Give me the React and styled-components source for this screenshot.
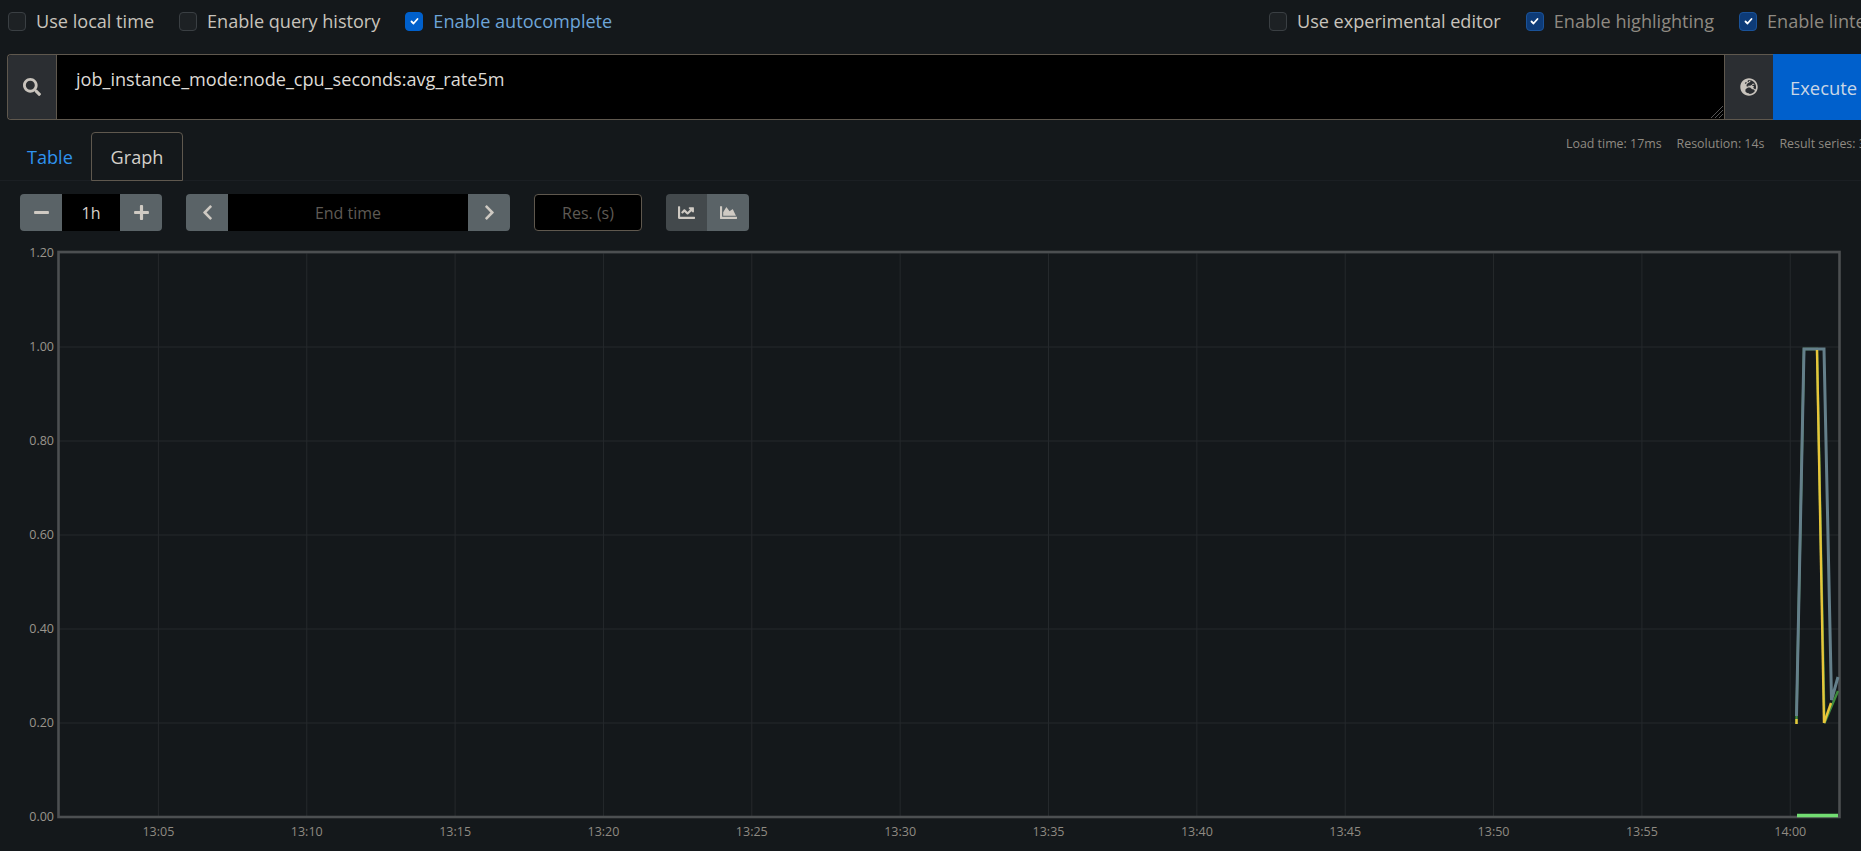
import React from 'react';
import styled, { createGlobalStyle } from 'styled-components';
import { FaSearch, FaGlobeEurope, FaMinus, FaPlus, FaChevronLeft, FaChevronRight, FaChartLine, FaChartArea } from 'react-icons/fa';

const Global = createGlobalStyle`
  html, body { margin: 0; padding: 0; background: #14181b; overflow: hidden; height: 100%; }
  body { font-family: "Open Sans", "Noto Sans", sans-serif; color: #c8c3bc; }
`;
const Page = styled.div`width: 1861px; height: 851px; overflow: hidden; background: #14181b;`;
const Options = styled.div`display: flex; justify-content: space-between; width: 1881px; height: 54px; padding: 0 8px; box-sizing: border-box;`;
const OptionGroup = styled.div`display: flex; align-items: center; gap: 25px;`;
const Option = styled.label`display: flex; align-items: center; gap: 10px; font-size: 18.1px; white-space: nowrap; padding-bottom: 12px; color: ${p => p.$tone || '#c8c3bc'};`;
const Box = styled.span`
  width: 18px; height: 19px; box-sizing: border-box; border-radius: 4px; display: flex; align-items: center; justify-content: center; flex: none;
  border: 1px solid ${p => p.$border || '#3a3f43'}; background: ${p => p.$bg || '#1d2124'};
`;
const QueryBar = styled.div`display: flex; width: 1900px; height: 66px; margin-left: 7px; box-sizing: border-box; border: 1px solid #5f584e; border-right: 0; border-radius: 4px 0 0 4px;`;
const Addon = styled.div`width: 48px; flex: none; background: #2b2e32; display: flex; align-items: center; justify-content: center; color: #c8c3bc; font-size: 18px; border-right: ${p => p.$right ? '1px solid #5f584e' : '0'}; border-left: ${p => p.$left ? '1px solid #5f584e' : '0'}; border-radius: ${p => p.$right ? '4px 0 0 4px' : '0'};`;
const QueryText = styled.div`position: relative; width: 1667px; flex: none; box-sizing: border-box; background: #000; color: #dedbd6; font-size: 18.1px; padding: 12px 19px; line-height: 24px;`;
const Grip = styled.svg`position: absolute; right: 0; bottom: 0;`;
const Execute = styled.div`flex: 1; background: #0060cc; color: #c9d6e6; font-size: 18.4px; margin: -1px 0; display: flex; align-items: center; padding-left: 17px;`;
const TabRow = styled.div`display: flex; align-items: flex-start; margin-top: 12px; height: 49px; padding-left: 7px; width: 1900px; box-sizing: border-box; box-shadow: inset 0 -1px 0 #1b1f23;`;
const TabLink = styled.div`width: 84px; height: 49px; box-sizing: border-box; padding-left: 20px; display: flex; align-items: center; color: #2f93ee; font-size: 18.1px;`;
const TabActive = styled.div`width: 92px; height: 49px; box-sizing: border-box; border: 1px solid #5f584e; border-radius: 4px 4px 0 0; display: flex; align-items: center; justify-content: center; font-size: 18.1px; color: #d4d0ca;`;
const Status = styled.div`display: flex; gap: 15px; margin-left: 1383px; margin-top: 3px; font-size: 12.4px; line-height: 18px; color: #8f8a82; white-space: nowrap;`;
const Controls = styled.div`display: flex; margin: 13px 0 0 20px; height: 37px;`;
const Group = styled.div`display: flex; height: 37px; margin-right: ${p => p.$gap || 0}px; border-radius: 4px; overflow: hidden; flex: none;`;
const Btn = styled.div`width: ${p => p.$w || 42}px; background: ${p => p.$bg || '#5a6367'}; color: #cfcac3; display: flex; align-items: center; justify-content: center; font-size: 17px; flex: none;`;
const Field = styled.div`width: ${p => p.$w}px; background: #000; display: flex; align-items: center; justify-content: center; font-size: 16px; color: ${p => p.$dim ? '#5e5a54' : '#d4d0ca'}; flex: none;`;
const Res = styled(Field)`border: 1px solid #5f584e; border-radius: 4px; height: 37px; box-sizing: border-box; margin-right: 24px;`;
const ChartBox = styled.svg`display: block; margin-top: 10px; width: 1861px; height: 610px;`;

const Check = () => (
  <svg width="11" height="10" viewBox="0 0 20 20"><path d="M4 11l4 4 8-9" fill="none" stroke="#fff" strokeWidth="3.6" strokeLinecap="round" strokeLinejoin="round" /></svg>
);

const OFF = 241;
const xs = ['13:05','13:10','13:15','13:20','13:25','13:30','13:35','13:40','13:45','13:50','13:55','14:00'];
const ys = [['1.20',253],['1.00',347],['0.80',441],['0.60',535],['0.40',629],['0.20',723],['0.00',817]];
const xAt = i => 158.4 + i * 148.35;
const pts = a => a.map(([x, y]) => `${x},${y - OFF}`).join(' ');

const Chart = () => (
  <ChartBox viewBox="0 0 1861 610">
    {xs.map((t, i) => (
      <g key={t}>
        <line x1={xAt(i)} x2={xAt(i)} y1={252 - OFF} y2={816 - OFF} stroke="#25292c" strokeWidth="1" />
        <text x={xAt(i)} y={836 - OFF} textAnchor="middle" fontSize="12.5" fill="#8f8a82" fontFamily="Open Sans, sans-serif">{t}</text>
      </g>
    ))}
    {ys.map(([t, y]) => (
      <g key={t}>
        <line x1="58" x2="1839" y1={y - OFF} y2={y - OFF} stroke="#25292c" strokeWidth="1" />
        <text x="54" y={y - OFF + 4} textAnchor="end" fontSize="12.5" fill="#9a958d" fontFamily="Open Sans, sans-serif">{t}</text>
      </g>
    ))}
    <rect x="58.5" y={252 - OFF} width="1781" height={565} fill="none" stroke="#4c4f51" strokeWidth="2.6" />
    <polyline points={pts([[1796.5,724],[1796.5,718],[1804,349],[1817,349],[1824.5,723],[1838,691]])} fill="none" stroke="#3e8a3e" strokeWidth="2.4" />
    <polyline points={pts([[1796.5,716],[1804,349],[1824,349],[1831.5,700],[1838,677]])} fill="none" stroke="#647f8a" strokeWidth="3" />
    <polyline points={pts([[1824,723],[1831,703]])} fill="none" stroke="#e8c53a" strokeWidth="2.4" />
    <polyline points={pts([[1796.5,724],[1796.5,719]])} fill="none" stroke="#e8c53a" strokeWidth="2.4" />
    <polyline points={pts([[1817,350],[1824,723]])} fill="none" stroke="#e8c53a" strokeWidth="2.4" />
    <line x1="1797" x2="1838" y1={815.5 - OFF} y2={815.5 - OFF} stroke="#72dd72" strokeWidth="3.4" />
  </ChartBox>
);

export default function App() {
  return (
    <Page>
      <Global />
      <Options>
        <OptionGroup>
          <Option><Box />Use local time</Option>
          <Option><Box />Enable query history</Option>
          <Option $tone="#6ea5d8"><Box $bg="#0060cc" $border="#0060cc"><Check /></Box>Enable autocomplete</Option>
        </OptionGroup>
        <OptionGroup>
          <Option><Box />Use experimental editor</Option>
          <Option $tone="#8f8a82"><Box $bg="#0d3b78" $border="#1a5298"><Check /></Box>Enable highlighting</Option>
          <Option $tone="#8f8a82"><Box $bg="#0d3b78" $border="#1a5298"><Check /></Box>Enable linter</Option>
        </OptionGroup>
      </Options>
      <QueryBar>
        <Addon $right><FaSearch /></Addon>
        <QueryText>
          job_instance_mode:node_cpu_seconds:avg_rate5m
          <Grip width="15" height="15" viewBox="0 0 15 15"><path d="M14 2L2 14M14 6L6 14M14 10L10 14" stroke="#555" strokeWidth="1" /></Grip>
        </QueryText>
        <Addon $left><FaGlobeEurope /></Addon>
        <Execute>Execute</Execute>
      </QueryBar>
      <TabRow>
        <TabLink>Table</TabLink>
        <TabActive>Graph</TabActive>
        <Status><span>Load time: 17ms</span><span>Resolution: 14s</span><span>Result series: 3</span></Status>
      </TabRow>
      <Controls>
        <Group $gap={24}>
          <Btn><FaMinus /></Btn><Field $w={58}>1h</Field><Btn><FaPlus /></Btn>
        </Group>
        <Group $gap={24}>
          <Btn><FaChevronLeft /></Btn><Field $w={240} $dim>End time</Field><Btn><FaChevronRight /></Btn>
        </Group>
        <Res $w={108} $dim>Res. (s)</Res>
        <Group>
          <Btn $w={41} $bg="#43494c"><FaChartLine /></Btn><Btn $w={42}><FaChartArea /></Btn>
        </Group>
      </Controls>
      <Chart />
    </Page>
  );
}
